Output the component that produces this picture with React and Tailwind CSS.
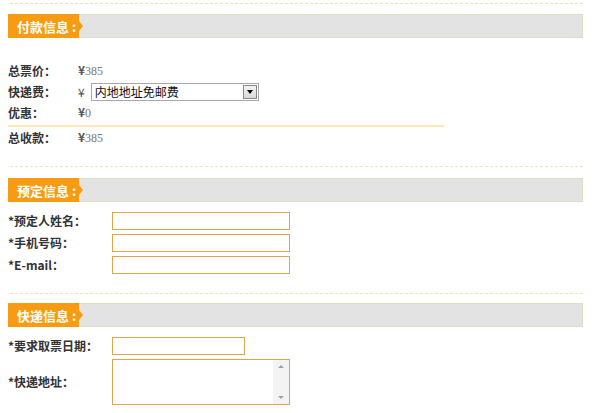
import React from 'react';

const FONT = { fontFamily: '"Noto Sans CJK SC", "DejaVu Sans", sans-serif' };

function Dotted({ className = '' }) {
  return <div className={`ml-[2px] h-0 border-t border-dashed border-[#efe3b4] ${className}`} />;
}

function SectionHeader({ title, className = '' }) {
  return (
    <div className={`flex h-[24px] border border-[#dcdfc4] bg-[#e3e3e3] ${className}`}>
      <div className="-my-px -ml-px flex h-[24px] w-[71px] shrink-0 items-center bg-[#f79c12] pl-[9px] text-[13px] font-bold leading-none text-white">
        {title}
        <span className="ml-[3px]">:</span>
      </div>
      <div className="-my-px h-0 w-0 self-center border-y-[5px] border-l-[4px] border-y-transparent border-l-[#f79c12]" />
    </div>
  );
}

function PayRow({ label, children, className = '' }) {
  return (
    <div className={`flex h-[21px] items-center ${className}`}>
      <div className="w-[70px] shrink-0 text-[12px] font-bold text-[#333]">{label}</div>
      <div className="flex items-center text-[12px] text-[#666]">{children}</div>
    </div>
  );
}

function Yuan({ value }) {
  return (
    <span className="flex items-baseline">
      <span className="text-[12px] font-bold text-[#555]">¥</span>
      <span className="text-[12px] text-[#777]" style={{ fontFamily: '"Liberation Serif", serif' }}>{value}</span>
    </span>
  );
}

function FormRow({ label, width = 'w-[178px]', className = '' }) {
  return (
    <div className={`flex h-[22px] items-start ${className}`}>
      <div className="w-[104px] shrink-0 pt-[2px] text-[12px] font-bold leading-[14px] text-[#333]">{label}</div>
      <div className={`h-[18px] shrink-0 ${width} border border-[#e0a54a] bg-white`} />
    </div>
  );
}

export default function App() {
  return (
    <div className="h-[413px] w-[597px] overflow-hidden bg-white px-[8px] pt-[3px]" style={FONT}>
      <div className="w-[575px]">
        <Dotted />
        <SectionHeader title="付款信息" className="mt-[10px]" />

        <div className="mt-[22px]">
          <PayRow label="总票价：">
            <Yuan value="385" />
          </PayRow>
          <PayRow label="快递费：">
            <span className="mr-[6px] text-[12px] text-[#555]">¥</span>
            <div className="flex h-[18px] w-[168px] items-center border border-[#a8a8a8] bg-white">
              <span className="flex-1 pl-[3px] text-[12px] leading-none text-[#111]">内地地址免邮费</span>
              <div className="mr-px flex h-[14px] w-[14px] items-center justify-center border border-[#888] bg-gradient-to-b from-[#f4f4f4] to-[#d8d8d8]">
                <div className="h-0 w-0 border-x-[3px] border-t-[4px] border-x-transparent border-t-black" />
              </div>
            </div>
          </PayRow>
          <PayRow label="优惠：">
            <Yuan value="0" />
          </PayRow>
          <div className="mt-[2px] h-[2px] w-[436px] bg-[#fde8b3]" />
          <PayRow label="总收款：" className="h-[20px]">
            <Yuan value="385" />
          </PayRow>
        </div>

        <Dotted className="mt-[18px]" />
        <SectionHeader title="预定信息" className="mt-[11px]" />

        <div className="mt-[10px]">
          <FormRow label="*预定人姓名：" />
          <FormRow label="*手机号码：" />
          <FormRow label="*E-mail：" />
        </div>

        <Dotted className="mt-[15px]" />
        <SectionHeader title="快递信息" className="mt-[9px]" />

        <div className="mt-[10px]">
          <FormRow label="*要求取票日期：" width="w-[133px]" className="h-[20px]" />
          <div className="flex items-center">
            <div className="w-[104px] shrink-0 text-[12px] font-bold text-[#333]">*快递地址：</div>
            <div className="flex h-[46px] w-[178px] shrink-0 justify-end border border-[#e0a54a] bg-white">
              <div className="flex w-[16px] flex-col items-center justify-between bg-[#f3f3f3] py-[5px]">
                <div className="h-0 w-0 border-x-[3px] border-b-[3px] border-x-transparent border-b-[#a0a0a0]" />
                <div className="h-0 w-0 border-x-[3px] border-t-[3px] border-x-transparent border-t-[#a0a0a0]" />
              </div>
            </div>
          </div>
        </div>
      </div>
    </div>
  );
}
